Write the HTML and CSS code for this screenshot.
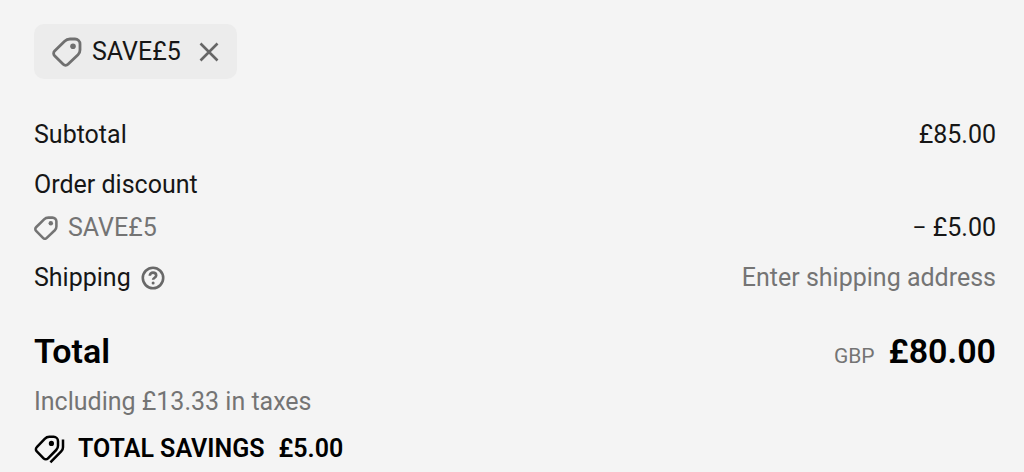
FILE: index.html
```html
<!DOCTYPE html>
<html lang="en">
<head>
<meta charset="utf-8">
<meta name="viewport" content="width=device-width, initial-scale=1">
<title>Order summary</title>
<link rel="stylesheet" href="styles.css">
</head>
<body>
<svg class="sprite" aria-hidden="true">
  <symbol id="tag" viewBox="0 0 30 30">
    <path d="M18 2h5a5 5 0 0 1 5 5v6c0 2-.6 3.4-2 4.8L16 27.3a3.4 3.4 0 0 1-4.8 0L2.6 18.7a3.2 3.2 0 0 1 0-4.6L12.6 4.2C14.2 2.6 15.6 2 18 2z" fill="none" stroke="currentColor"/>
    <circle cx="21" cy="9.2" r="2.8" fill="currentColor"/>
  </symbol>
</svg>
<main class="summary">
  <div class="chip">
    <svg class="chip-tag" aria-hidden="true"><use href="#tag"/></svg>
    <span>SAVE£5</span>
    <button class="chip-remove" type="button" aria-label="Remove SAVE£5">
      <svg class="cross" viewBox="0 0 20 20" aria-hidden="true"><path d="M1.5 1.5l17 17M18.5 1.5l-17 17"/></svg>
    </button>
  </div>
  <section class="lines">
    <div class="row"><span>Subtotal</span><span>£85.00</span></div>
    <div class="discount">
      <div class="row"><span>Order discount</span></div>
      <div class="row">
        <span class="code"><svg class="code-tag" aria-hidden="true"><use href="#tag"/></svg>SAVE£5</span>
        <span>− £5.00</span>
      </div>
    </div>
    <div class="row">
      <span class="shipping">Shipping
        <button class="help" type="button" aria-label="Shipping information">
          <svg class="help-icon" viewBox="0 0 24 24" aria-hidden="true">
            <circle cx="12" cy="12" r="10.2"/>
            <path d="M8.8 9.8c0-1.8 1.4-3.2 3.2-3.2s3.2 1.2 3.2 2.9c0 2.2-3.1 2.3-3.1 4.3"/>
            <circle class="dot" cx="12.1" cy="17" r="1.5"/>
          </svg>
        </button>
      </span>
      <span class="muted">Enter shipping address</span>
    </div>
  </section>
  <section class="totals">
    <div class="row total">
      <h2 class="grand">Total</h2>
      <div class="amount"><span class="currency">GBP</span><strong class="grand">£80.00</strong></div>
    </div>
    <p class="taxes muted">Including £13.33 in taxes</p>
    <div class="savings">
      <svg class="savings-icon" viewBox="0 0 30 28" aria-hidden="true">
        <path d="M15.4 1.8h4.2a4.4 4.4 0 0 1 4.4 4.4v4.6c0 1.8-.6 3-1.8 4.2l-8.2 8.4a3.1 3.1 0 0 1-4.4 0L2.8 16.4a3 3 0 0 1 0-4.3l7.9-8.3c1.4-1.4 2.7-2 4.7-2z"/>
        <path d="M29 4.4v7.8c0 1.8-.6 3-1.8 4.2L16.4 27.4"/>
        <circle class="dot" cx="17.4" cy="8.4" r="2.6"/>
      </svg>
      <span>TOTAL SAVINGS</span><span>£5.00</span>
    </div>
  </section>
</main>
</body>
</html>
```
FILE: styles.css
```css
* { box-sizing: border-box; }
body {
  margin: 0;
  background: #f4f4f4;
  color: #161616;
  font: 400 25px/32px Roboto, sans-serif;
}
svg { display: block; flex: none; overflow: visible; }
button {
  padding: 0;
  border: 0;
  background: none;
  color: inherit;
  font: inherit;
  cursor: pointer;
}
h2, p { margin: 0; }
.sprite { position: absolute; width: 0; height: 0; }
.summary { padding: 24px 28px 8px 34px; }
.chip {
  display: flex;
  width: fit-content;
  align-items: center;
  gap: 10px;
  height: 55px;
  padding: 0 18px;
  border-radius: 10px;
  background: #ececec;
}
.chip-tag { width: 30px; height: 30px; color: #707070; stroke-width: 2.8; }
.chip-remove { margin-left: 8px; color: #666; }
.cross { width: 20px; height: 20px; fill: none; stroke: currentColor; stroke-width: 2.6; }
.lines { display: grid; gap: 18px; margin-top: 40px; }
.discount { display: grid; gap: 11px; }
.row { display: flex; justify-content: space-between; align-items: center; }
.muted, .code, .currency { color: #747474; }
.code { display: flex; align-items: center; gap: 10px; }
.code-tag { width: 24px; height: 24px; stroke-width: 3.2; }
.shipping { display: flex; align-items: center; gap: 10px; }
.help { color: #686868; }
.help-icon { width: 24px; height: 24px; fill: none; stroke: currentColor; stroke-width: 2.6; }
.dot { fill: currentColor; stroke: none; }
.totals { margin-top: 36px; color: #000; }
.total { align-items: baseline; line-height: 42px; }
.grand { font-size: 34px; font-weight: 600; }
.amount { display: flex; align-items: baseline; gap: 14px; }
.currency { font-size: 21px; }
.taxes { margin-top: 9px; }
.savings { display: flex; align-items: center; gap: 14px; margin-top: 15px; font-weight: 600; }
.savings-icon { width: 30px; height: 28px; fill: none; stroke: currentColor; stroke-width: 2.5; }
```
